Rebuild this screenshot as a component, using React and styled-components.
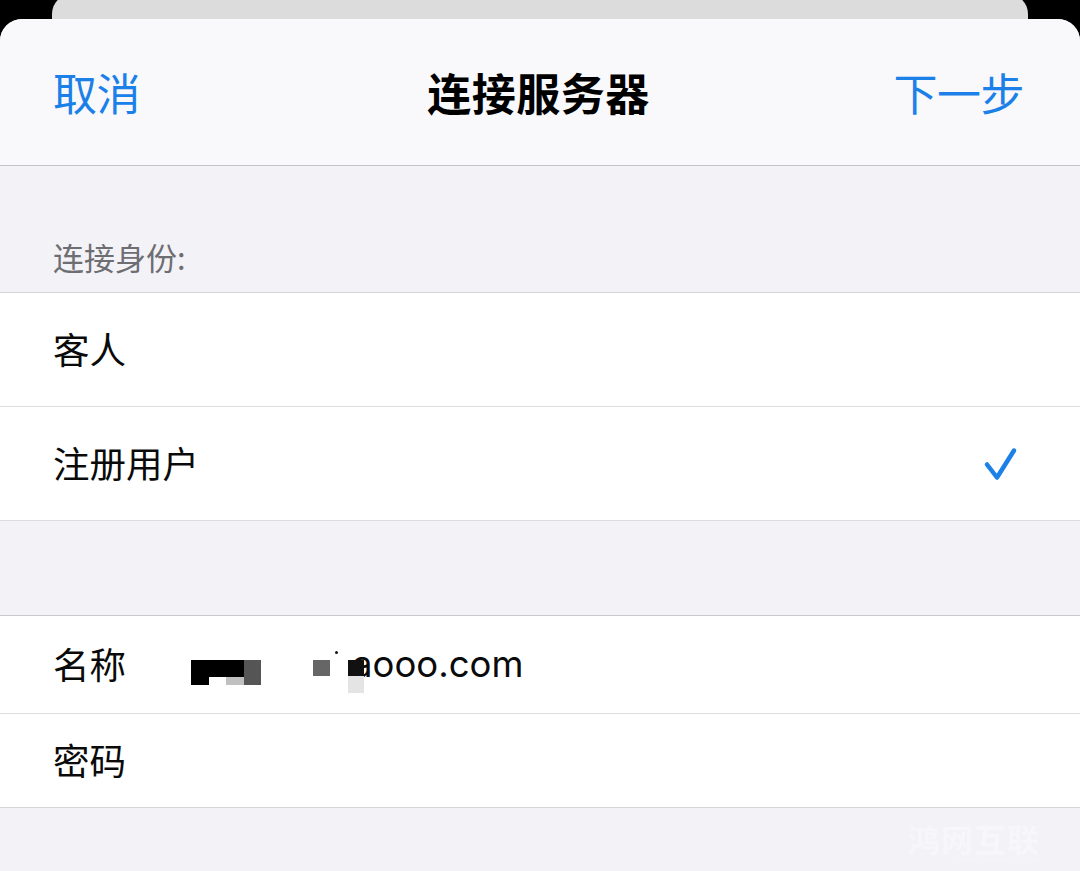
import React from "react";
import styled, { createGlobalStyle } from "styled-components";

const Global = createGlobalStyle`
  html, body { margin: 0; padding: 0; background: #000; overflow: hidden; }
  body { font-family: "Noto Sans CJK SC", "Noto Sans", sans-serif; -webkit-font-smoothing: antialiased; }
  * { box-sizing: border-box; }
`;

const Backdrop = styled.div`
  height: 19px;
  overflow: hidden;
  background: #000;
  padding: 0 52px;
`;

const BehindCard = styled.div`
  height: 40px;
  margin-top: -6px;
  background: #dcdcdc;
  border-radius: 20px 20px 0 0;
`;

const Sheet = styled.div`
  min-height: calc(100vh - 19px);
  background: #f2f2f7;
  border-radius: 22px 22px 0 0;
  overflow: hidden;
  display: flex;
  flex-direction: column;
`;

const Header = styled.header`
  height: 147px;
  background: #f9f9fb;
  border-bottom: 1px solid #c4c4c7;
  display: grid;
  grid-template-columns: 1fr auto 1fr;
  align-items: center;
  padding: 0 56px 0 53px;
`;

const NavButton = styled.span`
  font-size: 44px;
  line-height: 1;
  color: #1b80e8;
  justify-self: ${(p) => (p.$end ? "end" : "start")};
  letter-spacing: -0.5px;
`;

const Title = styled.h1`
  margin: 0;
  font-size: 44px;
  line-height: 1;
  font-weight: 600;
  color: #000;
  letter-spacing: 0.5px;
`;

const SectionGap = styled.div`
  height: ${(p) => p.$h}px;
  display: flex;
  align-items: flex-end;
  padding: 0 53px ${(p) => p.$pb || 0}px;
  border-bottom: 1px solid ${(p) => p.$line || "#d1d1d6"};
`;

const SectionLabel = styled.span`
  font-size: 31px;
  line-height: 1;
  color: #6d6d72;
`;

const Row = styled.div`
  height: ${(p) => p.$h}px;
  background: #fff;
  border-bottom: 1px solid ${(p) => p.$line || "#dededf"};
  display: flex;
  align-items: center;
  padding: 0 62px 0 53px;
`;

const RowLabel = styled.span`
  font-size: 36.5px;
  line-height: 1;
  color: #0a0a0a;
  width: 138px;
  flex: none;
`;

const RowText = styled.span`
  font-size: 36.5px;
  line-height: 1;
  color: #0a0a0a;
  flex: 1;
`;

const Check = styled.svg`
  width: 40px;
  height: 40px;
  flex: none;
`;

const Value = styled.div`
  position: relative;
  flex: 1;
  height: 60px;
  display: flex;
  align-items: flex-start;
`;

const Mosaic = styled.div`
  display: grid;
  grid-template-columns: repeat(4, 17.5px);
  grid-template-rows: 17px 8px;
  margin-top: 25px;
`;

const Cell = styled.span`
  background: ${(p) => p.$c};
`;

const Piece = styled.span`
  position: absolute;
  left: ${(p) => p.$x}px;
  top: ${(p) => p.$y}px;
  width: ${(p) => p.$w}px;
  height: ${(p) => p.$h}px;
  background: ${(p) => p.$c};
  border-radius: ${(p) => p.$r || 0}px;
`;

const Domain = styled.span`
  position: absolute;
  left: 161px;
  top: 11px;
  font-family: Inter, "Noto Sans", sans-serif;
  font-size: 36.5px;
  line-height: 1;
  color: #0a0a0a;
`;

const Footer = styled.div`
  flex: 1;
  position: relative;
  background: #f2f2f7;
`;

const Watermark = styled.div`
  position: absolute;
  right: 40px;
  top: 14px;
  display: flex;
  flex-direction: column;
  align-items: flex-end;
  color: #f7f7fa;
`;

const WatermarkTitle = styled.span`
  font-size: 32px;
  line-height: 1;
  font-weight: 700;
  letter-spacing: 1px;
`;

const WatermarkSub = styled.span`
  font-family: "Liberation Sans", sans-serif;
  font-size: 8px;
  line-height: 1;
  margin-top: 3px;
  letter-spacing: 1px;
`;

export default function App() {
  const mosaic = ["#000", "#000", "#000", "#555", "#000", "#fff", "#c0c0c0", "#555"];
  return (
    <>
      <Global />
      <Backdrop>
        <BehindCard />
      </Backdrop>
      <Sheet>
        <Header>
          <NavButton>取消</NavButton>
          <Title>连接服务器</Title>
          <NavButton $end>下一步</NavButton>
        </Header>
        <SectionGap $h={127} $pb={20} $line="#d3d3d8">
          <SectionLabel>连接身份:</SectionLabel>
        </SectionGap>
        <Row $h={114}>
          <RowText>客人</RowText>
        </Row>
        <Row $h={114} $line="#dcdcde">
          <RowText>注册用户</RowText>
          <Check viewBox="0 0 40 40">
            <path
              d="M9 20.5 L19 33.5 L36 6.5"
              fill="none"
              stroke="#1b80e8"
              strokeWidth="4.5"
              strokeLinecap="round"
              strokeLinejoin="round"
            />
          </Check>
        </Row>
        <SectionGap $h={95} $line="#c9c9ce" />
        <Row $h={98}>
          <RowLabel>名称</RowLabel>
          <Value>
            <Mosaic>
              {mosaic.map((c, i) => (
                <Cell key={i} $c={c} />
              ))}
            </Mosaic>
            <Domain>aooo.com</Domain>
            <Piece $x={122} $y={25} $w={17} $h={16} $c="#666" />
            <Piece $x={144} $y={16} $w={3} $h={3} $c="#111" $r={2} />
            <Piece $x={157} $y={25} $w={16} $h={16} $c="#111" />
            <Piece $x={157} $y={41} $w={16} $h={17} $c="#e4e4e4" />
          </Value>
        </Row>
        <Row $h={94} $line="#d6d6d8">
          <RowText>密码</RowText>
        </Row>
        <Footer>
          <Watermark>
            <WatermarkTitle>鸿网互联</WatermarkTitle>
            <WatermarkSub>HONGWANG.COM</WatermarkSub>
          </Watermark>
        </Footer>
      </Sheet>
    </>
  );
}
